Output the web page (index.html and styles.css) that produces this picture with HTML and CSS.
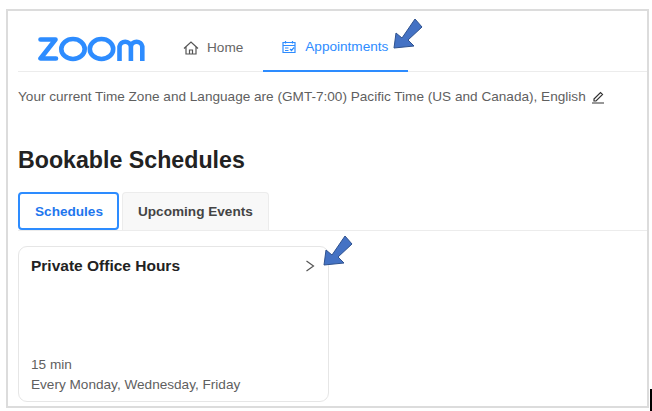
FILE: index.html
```html
<!DOCTYPE html>
<html lang="en">

<head>
    <meta charset="UTF-8">
    <title>Appointments</title>
    <link rel="stylesheet" href="styles.css">
</head>

<body>

    <div class="frame">

        <div class="topbar">
            <svg class="logo" width="108" height="26" viewBox="0 0 108 26" fill="none" stroke="#2d8cff" stroke-width="4.600">
                <path d="M2.500 3.500h15L2.500 22.500h15.500" stroke-linejoin="round" stroke-linecap="round" />
                <ellipse cx="35" cy="13" rx="11.700" ry="10" />
                <ellipse cx="63.500" cy="13" rx="11.700" ry="10" />
                <path d="M81.500 25V10.500a5.800 5.800 0 0 1 11.400 0V25M92.900 10.500a5.800 5.800 0 0 1 11.400 0V25" />
            </svg>

            <a class="tab">
                <svg width="16" height="16" viewBox="0 0 16 16" fill="none" stroke="#555" stroke-width="1.200">
                    <path d="M1 8.500L8 2l7 6.500M3 7v7h10V7M6.500 14v-4h3v4" />
                </svg>
                Home
            </a>
            <a class="tab active">
                <svg width="16" height="16" viewBox="0 0 16 16" fill="none" stroke="#2d8cff" stroke-width="1.200">
                    <path d="M2 3.500h12v10H2zM2 6.500h12M4.500 2v2.500M11.500 2v2.500M4 9h3.500M4 11.500h3.500M9 10l1.500 1.500L13 8.500" />
                </svg>
                Appointments
            </a>
        </div>

        <div class="timezone">
            Your current Time Zone and Language are (GMT-7:00) Pacific Time (US and Canada), English
            <svg width="14" height="14" viewBox="0 0 14 14" fill="none" stroke="#333" stroke-width="1.200">
                <path d="M3 9L9.500 2.500l2 2L5 11H3zM1 13h12" />
            </svg>
        </div>

        <h1>Bookable Schedules</h1>

        <div class="tabs">
            <button class="pill selected">Schedules</button>
            <button class="pill">Upcoming Events</button>
        </div>

        <div class="card">
            <div class="card-head">
                <span class="card-title">Private Office Hours</span>
                <svg width="12" height="14" viewBox="0 0 12 14" fill="none" stroke="#555" stroke-width="1.200">
                    <path d="M2.500 2L9.500 7l-7 5" />
                </svg>
            </div>
            <div class="card-info">
                <div>15 min</div>
                <div>Every Monday, Wednesday, Friday</div>
            </div>
        </div>

    </div>

    <!-- callout arrows drawn over the screenshot -->
    <svg class="arrow arrow-top" width="30" height="31" viewBox="0 0 30 31">
        <path d="M1 30L3 15l6 5L22 1l7 8-14 13 6 6z" fill="#4472c4" stroke="#2f528f" />
    </svg>
    <svg class="arrow arrow-card" width="30" height="31" viewBox="0 0 30 31">
        <path d="M1 30L3 15l6 5L22 1l7 8-14 13 6 6z" fill="#4472c4" stroke="#2f528f" />
    </svg>
    <div class="cursor-mark"></div>

</body>

</html>
```

FILE: styles.css
```css
html,
body {
    margin: 0;
    height: 411px;
    overflow: hidden;
}

body {
    padding: 9px 3px 3px 6px;
    box-sizing: border-box;
    background-color: white;
    color: #5f5f5f;
    font-family: "Liberation Sans", Arial, sans-serif;
    font-size: 13.6px;
}

.frame {
    height: 399px;
    box-sizing: border-box;
    padding-left: 10px;
    border: 2px solid #dcdcdc;
    overflow: hidden;
}

.topbar {
    display: flex;
    height: 60px;
    border-bottom: 1px solid #ececec;
}

.logo {
    margin: 25px 19px 0 20px;
}

.tab {
    display: flex;
    align-items: center;
    gap: 8px;
    box-sizing: border-box;
    height: 61px;
    padding: 12px 20px 0 18px;
    color: #666;
}

.tab.active {
    color: #2d8cff;
    border-bottom: 2px solid #2d8cff;
}

.timezone {
    display: flex;
    align-items: center;
    gap: 5px;
    margin-top: 17px;
    line-height: 16px;
}

h1 {
    margin: 41px 0 0;
    color: #222;
    font-size: 23.2px;
    line-height: 28px;
}

.tabs {
    display: flex;
    gap: 3px;
    height: 38px;
    margin-top: 18px;
    border-bottom: 1px solid #ececec;
}

.pill {
    padding: 0 15px;
    border: 1px solid #ececec;
    border-bottom: none;
    border-radius: 4px 4px 0 0;
    background-color: #f8f8f8;
    color: #444;
    font-family: inherit;
    font-size: 13.6px;
    font-weight: bold;
}

.pill.selected {
    padding: 0 14px 0 15px;
    border: 2px solid #2d8cff;
    border-radius: 4px;
    background-color: white;
    color: #1f77ee;
}

.card {
    display: flex;
    flex-direction: column;
    justify-content: space-between;
    box-sizing: border-box;
    width: 311px;
    height: 156px;
    margin-top: 15px;
    padding: 10px 12px 6px;
    border: 1px solid #e6e6e6;
    border-radius: 9px;
}

.card-head {
    display: flex;
    justify-content: space-between;
    align-items: center;
}

.card-title {
    color: #222;
    font-size: 15.5px;
    font-weight: bold;
}

.card-info {
    line-height: 20px;
}

.arrow {
    position: absolute;
}

.arrow-top {
    left: 393px;
    top: 18px;
}

.arrow-card {
    left: 323px;
    top: 235px;
}

.cursor-mark {
    position: absolute;
    left: 650px;
    top: 389px;
    width: 2px;
    height: 22px;
    background-color: black;
}
```
